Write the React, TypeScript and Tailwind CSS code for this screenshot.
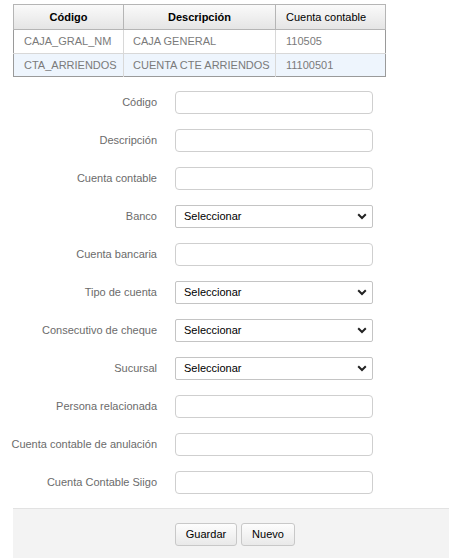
import React from 'react';

const rows = [
  { codigo: 'CAJA_GRAL_NM', desc: 'CAJA GENERAL', cuenta: '110505' },
  { codigo: 'CTA_ARRIENDOS', desc: 'CUENTA CTE ARRIENDOS', cuenta: '11100501' },
];

const fields = [
  { label: 'Código', type: 'input' },
  { label: 'Descripción', type: 'input' },
  { label: 'Cuenta contable', type: 'input' },
  { label: 'Banco', type: 'select' },
  { label: 'Cuenta bancaria', type: 'input' },
  { label: 'Tipo de cuenta', type: 'select' },
  { label: 'Consecutivo de cheque', type: 'select' },
  { label: 'Sucursal', type: 'select' },
  { label: 'Persona relacionada', type: 'input' },
  { label: 'Cuenta contable de anulación', type: 'input' },
  { label: 'Cuenta Contable Siigo', type: 'input' },
];

function Chevron() {
  return (
    <svg width="10" height="7" viewBox="0 0 10 7" className="pointer-events-none absolute right-[6px] top-[8px]">
      <path d="M1.2 1.3 L5 5 L8.8 1.3" fill="none" stroke="#222" strokeWidth="2" />
    </svg>
  );
}

export default function App() {
  return (
    <div className="w-[449px] h-[558px] bg-white pt-[4px] text-[11px] whitespace-nowrap font-['Liberation_Sans',Arial,sans-serif] overflow-hidden">
      {/* Table */}
      <table className="ml-[13px] w-[373px] table-fixed border-collapse border border-[#9a9a9a] text-left">
        <thead>
          <tr className="h-[25px] bg-gradient-to-b from-[#fafafa] to-[#e4e4e4]">
            <th className="w-[110px] border border-[#b5b5b5] text-center font-bold text-black">Código</th>
            <th className="w-[152px] border border-[#b5b5b5] text-center font-bold text-black">Descripción</th>
            <th className="border border-[#b5b5b5] px-[10px] text-left font-normal text-black">Cuenta contable</th>
          </tr>
        </thead>
        <tbody>
          {rows.map((r, i) => (
            <tr key={r.codigo} className={i === 1 ? 'h-[23px] bg-[#eef5fd]' : 'h-[24px] bg-white'}>
              <td className="border-r border-t border-[#d8d8d8] px-[10px] text-[#7a7a7a]">{r.codigo}</td>
              <td className="border-r border-t border-[#d8d8d8] px-[9px] text-[#7a7a7a]">{r.desc}</td>
              <td className="border-t border-[#d8d8d8] px-[10px] text-[#7a7a7a]">{r.cuenta}</td>
            </tr>
          ))}
        </tbody>
      </table>

      {/* Form */}
      <div className="mt-[14px] flex flex-col gap-[15px]">
        {fields.map((f) => (
          <div key={f.label} className="flex items-center h-[23px]">
            <label className="w-[157px] text-right text-[#6b6b6b]">{f.label}</label>
            <div className="ml-[18px] relative w-[198px] h-[23px]">
              {f.type === 'input' ? (
                <input className="w-full h-full rounded-[4px] border border-[#cfcfcf] bg-white px-2 outline-none" />
              ) : (
                <>
                  <select className="w-full h-full appearance-none rounded-[2px] border border-[#c4c4c4] bg-white pl-[8px] text-[11px] text-black outline-none">
                    <option>Seleccionar</option>
                  </select>
                  <Chevron />
                </>
              )}
            </div>
          </div>
        ))}
      </div>

      {/* Footer */}
      <div className="mt-[14px] ml-[13px] h-[60px] border-t border-[#e2e2e2] bg-[#f3f3f3] flex gap-[4px] pl-[162px] pt-[14px]">
        <button className="h-[23px] w-[62px] rounded-[3px] border border-[#c8c8c8] bg-gradient-to-b from-[#fdfdfd] to-[#e9e9e9] text-black">Guardar</button>
        <button className="h-[23px] w-[54px] rounded-[3px] border border-[#c8c8c8] bg-gradient-to-b from-[#fdfdfd] to-[#e9e9e9] text-black">Nuevo</button>
      </div>
    </div>
  );
}
